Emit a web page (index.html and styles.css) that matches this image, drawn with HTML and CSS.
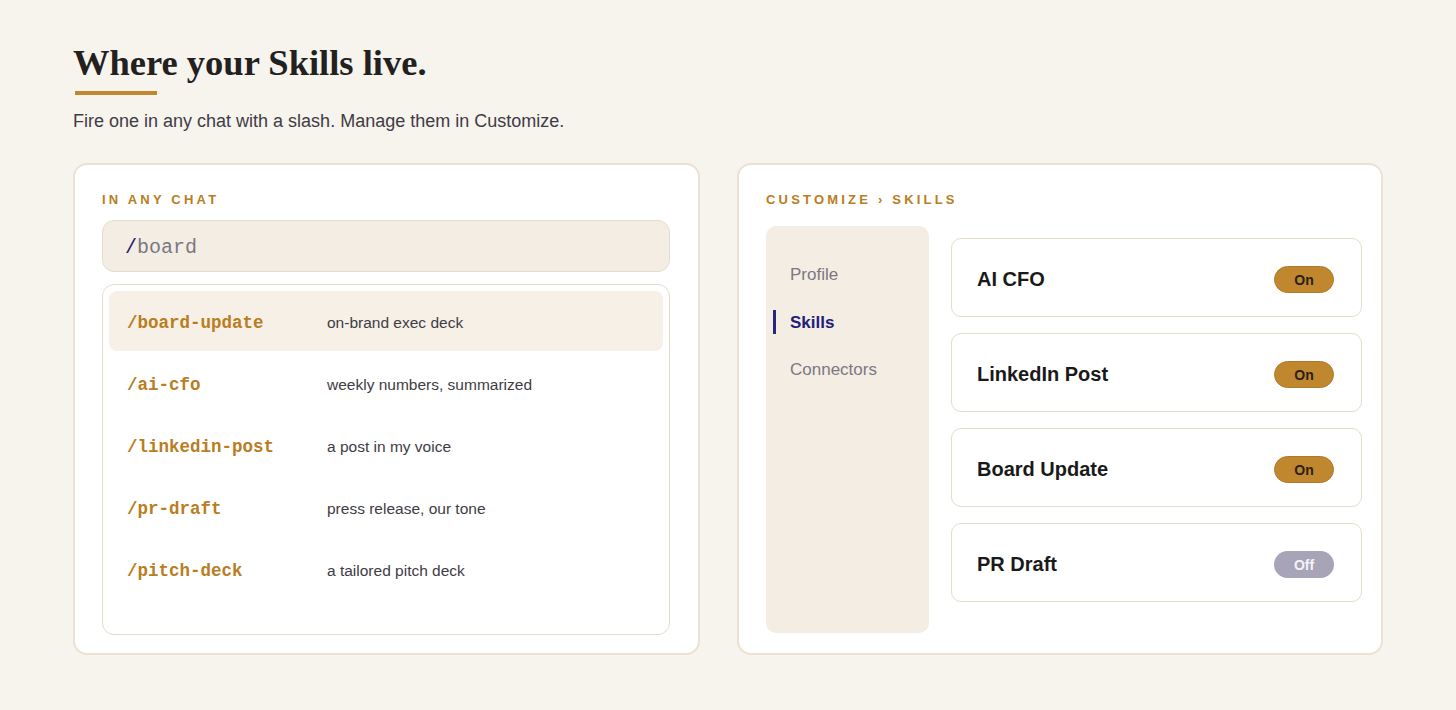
FILE: index.html
```html
<!DOCTYPE html>
<html lang="en">
<head>
    <meta charset="UTF-8">
    <meta name="viewport" content="width=device-width, initial-scale=1.0">
    <title>Where your Skills live</title>
    <link rel="stylesheet" href="styles.css">
</head>
<body>

<div class="page">
    <h1>Where your Skills live.</h1>
    <div class="accent-bar"></div>
    <p class="subtitle">Fire one in any chat with a slash. Manage them in Customize.</p>

    <div class="panels">
        <!-- Panneau gauche : commande slash dans le chat -->
        <div class="card chat-card">
            <div class="card-label">IN ANY CHAT</div>
            <div class="slash-input"><span class="slash">/</span>board</div>
            <div class="command-list">
                <div class="command active">
                    <span class="command-name">/board-update</span>
                    <span class="command-desc">on-brand exec deck</span>
                </div>
                <div class="command">
                    <span class="command-name">/ai-cfo</span>
                    <span class="command-desc">weekly numbers, summarized</span>
                </div>
                <div class="command">
                    <span class="command-name">/linkedin-post</span>
                    <span class="command-desc">a post in my voice</span>
                </div>
                <div class="command">
                    <span class="command-name">/pr-draft</span>
                    <span class="command-desc">press release, our tone</span>
                </div>
                <div class="command">
                    <span class="command-name">/pitch-deck</span>
                    <span class="command-desc">a tailored pitch deck</span>
                </div>
            </div>
        </div>

        <!-- Panneau droit : réglages des skills -->
        <div class="card customize-card">
            <div class="card-label">CUSTOMIZE &rsaquo; SKILLS</div>
            <div class="customize-body">
                <div class="sidebar">
                    <div class="nav-item">Profile</div>
                    <div class="nav-item selected">Skills</div>
                    <div class="nav-item">Connectors</div>
                </div>
                <div class="skill-list">
                    <div class="skill">
                        <span class="skill-name">AI CFO</span>
                        <span class="toggle on">On</span>
                    </div>
                    <div class="skill">
                        <span class="skill-name">LinkedIn Post</span>
                        <span class="toggle on">On</span>
                    </div>
                    <div class="skill">
                        <span class="skill-name">Board Update</span>
                        <span class="toggle on">On</span>
                    </div>
                    <div class="skill">
                        <span class="skill-name">PR Draft</span>
                        <span class="toggle off">Off</span>
                    </div>
                </div>
            </div>
        </div>
    </div>
</div>

</body>
</html>
```

FILE: styles.css
```css
body {
    margin: 0;
    background-color: #f7f3ed;
    font-family: "Liberation Sans", Arial, sans-serif;
    color: #1c1b1f;
}
.page {
    padding: 40px 73px 0 73px;
}
h1 {
    font-family: "Liberation Serif", "Times New Roman", serif;
    font-size: 36.5px;
    font-weight: bold;
    color: #222120;
    margin: 0;
    line-height: 46px;
}
.accent-bar {
    width: 82px;
    height: 4px;
    background-color: #c0882f;
    margin: 5px 0 0 2px;
}
.subtitle {
    font-size: 18px;
    color: #3e3c45;
    margin: 13px 0 0 0;
    line-height: 26px;
}
.panels {
    display: grid;
    grid-template-columns: 627fr 646fr;
    gap: 37px;
    margin-top: 29px;
}
.card {
    background-color: white;
    border: 2px solid #ebe2d5;
    border-radius: 14px;
    display: flex;
    flex-direction: column;
    height: 492px;
    box-sizing: border-box;
}
.chat-card {
    padding: 27px 28px 18px 27px;
}
.customize-card {
    padding: 27px 19px 20px 27px;
}
.card-label {
    font-size: 13px;
    font-weight: bold;
    letter-spacing: 3.2px;
    color: #b97d22;
    line-height: 16px;
}
.slash-input {
    margin-top: 12px;
    height: 52px;
    box-sizing: border-box;
    background-color: #f4ede3;
    border: 1.5px solid #e6dccd;
    border-radius: 12px;
    padding: 2px 22px 0 22px;
    display: flex;
    align-items: center;
    font-family: "Liberation Mono", "Courier New", monospace;
    font-size: 20px;
    color: #7b7882;
}
.slash {
    color: #1f1b78;
}
.command-list {
    margin-top: 12px;
    flex: 1;
    border: 1.5px solid #e6dccd;
    border-radius: 12px;
    padding: 6px;
}
.command {
    display: flex;
    align-items: center;
    height: 60px;
    box-sizing: border-box;
    margin-bottom: 2px;
    padding: 4px 0 0 18px;
    border-radius: 8px;
}
.command.active {
    background-color: #f7f0e6;
}
.command-name {
    width: 200px;
    font-family: "Liberation Mono", "Courier New", monospace;
    font-weight: bold;
    font-size: 17.5px;
    color: #b97d22;
}
.command-desc {
    font-size: 15.5px;
    color: #3e3c45;
}
.customize-body {
    flex: 1;
    display: flex;
    gap: 22px;
    margin-top: 18px;
}
.sidebar {
    width: 163px;
    background-color: #f4ede3;
    border-radius: 10px;
    padding-top: 25px;
}
.nav-item {
    font-size: 17px;
    color: #7b7882;
    padding: 0 0 0 24px;
    height: 47.5px;
    line-height: 47.5px;
    position: relative;
}
.nav-item.selected {
    color: #221d7a;
    font-weight: bold;
}
.nav-item.selected::before {
    content: "";
    position: absolute;
    left: 7px;
    top: 11px;
    width: 3px;
    height: 24px;
    background-color: #2a2580;
}
.skill-list {
    flex: 1;
    display: flex;
    flex-direction: column;
    gap: 16px;
    padding-top: 12px;
}
.skill {
    height: 79px;
    box-sizing: border-box;
    border: 1.5px solid #e6dccd;
    border-radius: 10px;
    display: flex;
    align-items: center;
    justify-content: space-between;
    padding: 4px 27px 0 25px;
}
.skill-name {
    font-size: 20px;
    font-weight: bold;
    color: #1a1a1a;
}
.toggle {
    width: 60px;
    height: 27px;
    box-sizing: border-box;
    border-radius: 14px;
    display: flex;
    align-items: center;
    justify-content: center;
    font-size: 14px;
    font-weight: bold;
}
.toggle.on {
    background-color: #c0872f;
    border: 1px solid #b17a26;
    color: #2a2114;
}
.toggle.off {
    background-color: #a8a4b8;
    color: #f4f2f7;
}
```
